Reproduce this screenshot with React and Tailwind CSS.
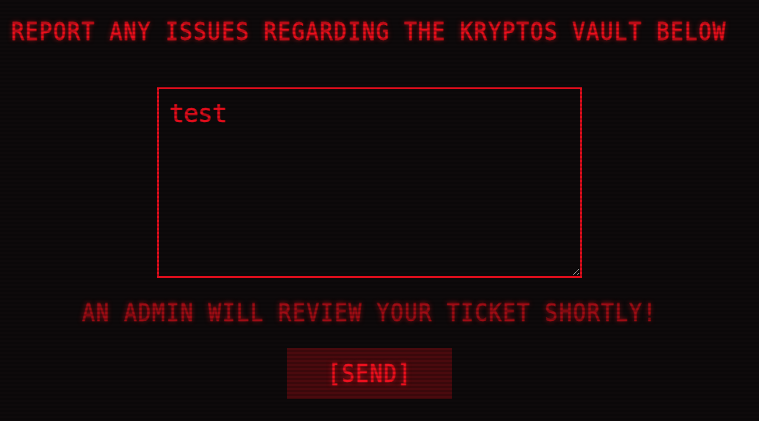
import { useState } from "react";

const Glow = ({ children, className = "" }) => (
  <span
    className={`inline-block scale-x-85 whitespace-nowrap tracking-[1.45px] [-webkit-text-stroke:0.4px_currentColor] [text-shadow:0_0_6px_rgba(255,20,30,0.6)] ${className}`}
  >
    {children}
  </span>
);

const App = () => {
  const [ticket, setTicket] = useState("test");

  return (
    <div className="relative min-h-screen overflow-hidden bg-[#0e0a0b] font-['DejaVu_Sans_Mono',monospace] text-[25px] leading-[29px]">
      <div className="w-[739px]">
        <h1 className="whitespace-nowrap pt-[17px] pl-[11px] font-normal text-[#ec0f1d]">
          <Glow className="origin-left">REPORT ANY ISSUES REGARDING THE KRYPTOS VAULT BELOW</Glow>
        </h1>

        <div className="mt-[41px] flex justify-center">
          <textarea
            value={ticket}
            onChange={(e) => setTicket(e.target.value)}
            spellCheck={false}
            className="block h-[191px] w-[425px] border-2 border-[#e50d1c] bg-transparent p-[10px] text-[25px] leading-[29px] tracking-[-0.75px] text-[#e50d1c] outline-none [-webkit-text-stroke:0.3px_currentColor]"
          />
        </div>

        <p className="mt-[20px] flex justify-center text-[#a00c15]">
          <Glow className="origin-center [text-shadow:0_0_6px_rgba(200,10,20,0.55)]">
            AN ADMIN WILL REVIEW YOUR TICKET SHORTLY!
          </Glow>
        </p>

        <div className="mt-[21px] flex justify-center">
          <button className="h-[51px] w-[165px] bg-[#4a0a0e] text-[#f0101f] hover:bg-[#5a0c11]">
            <Glow className="origin-center">[SEND]</Glow>
          </button>
        </div>
      </div>

      {/* crt scanlines */}
      <div className="pointer-events-none absolute inset-0 bg-[repeating-linear-gradient(to_bottom,transparent_0px,transparent_2px,rgba(0,0,0,0.22)_2px,rgba(0,0,0,0.22)_4px)]" />
    </div>
  );
};

export default App;
